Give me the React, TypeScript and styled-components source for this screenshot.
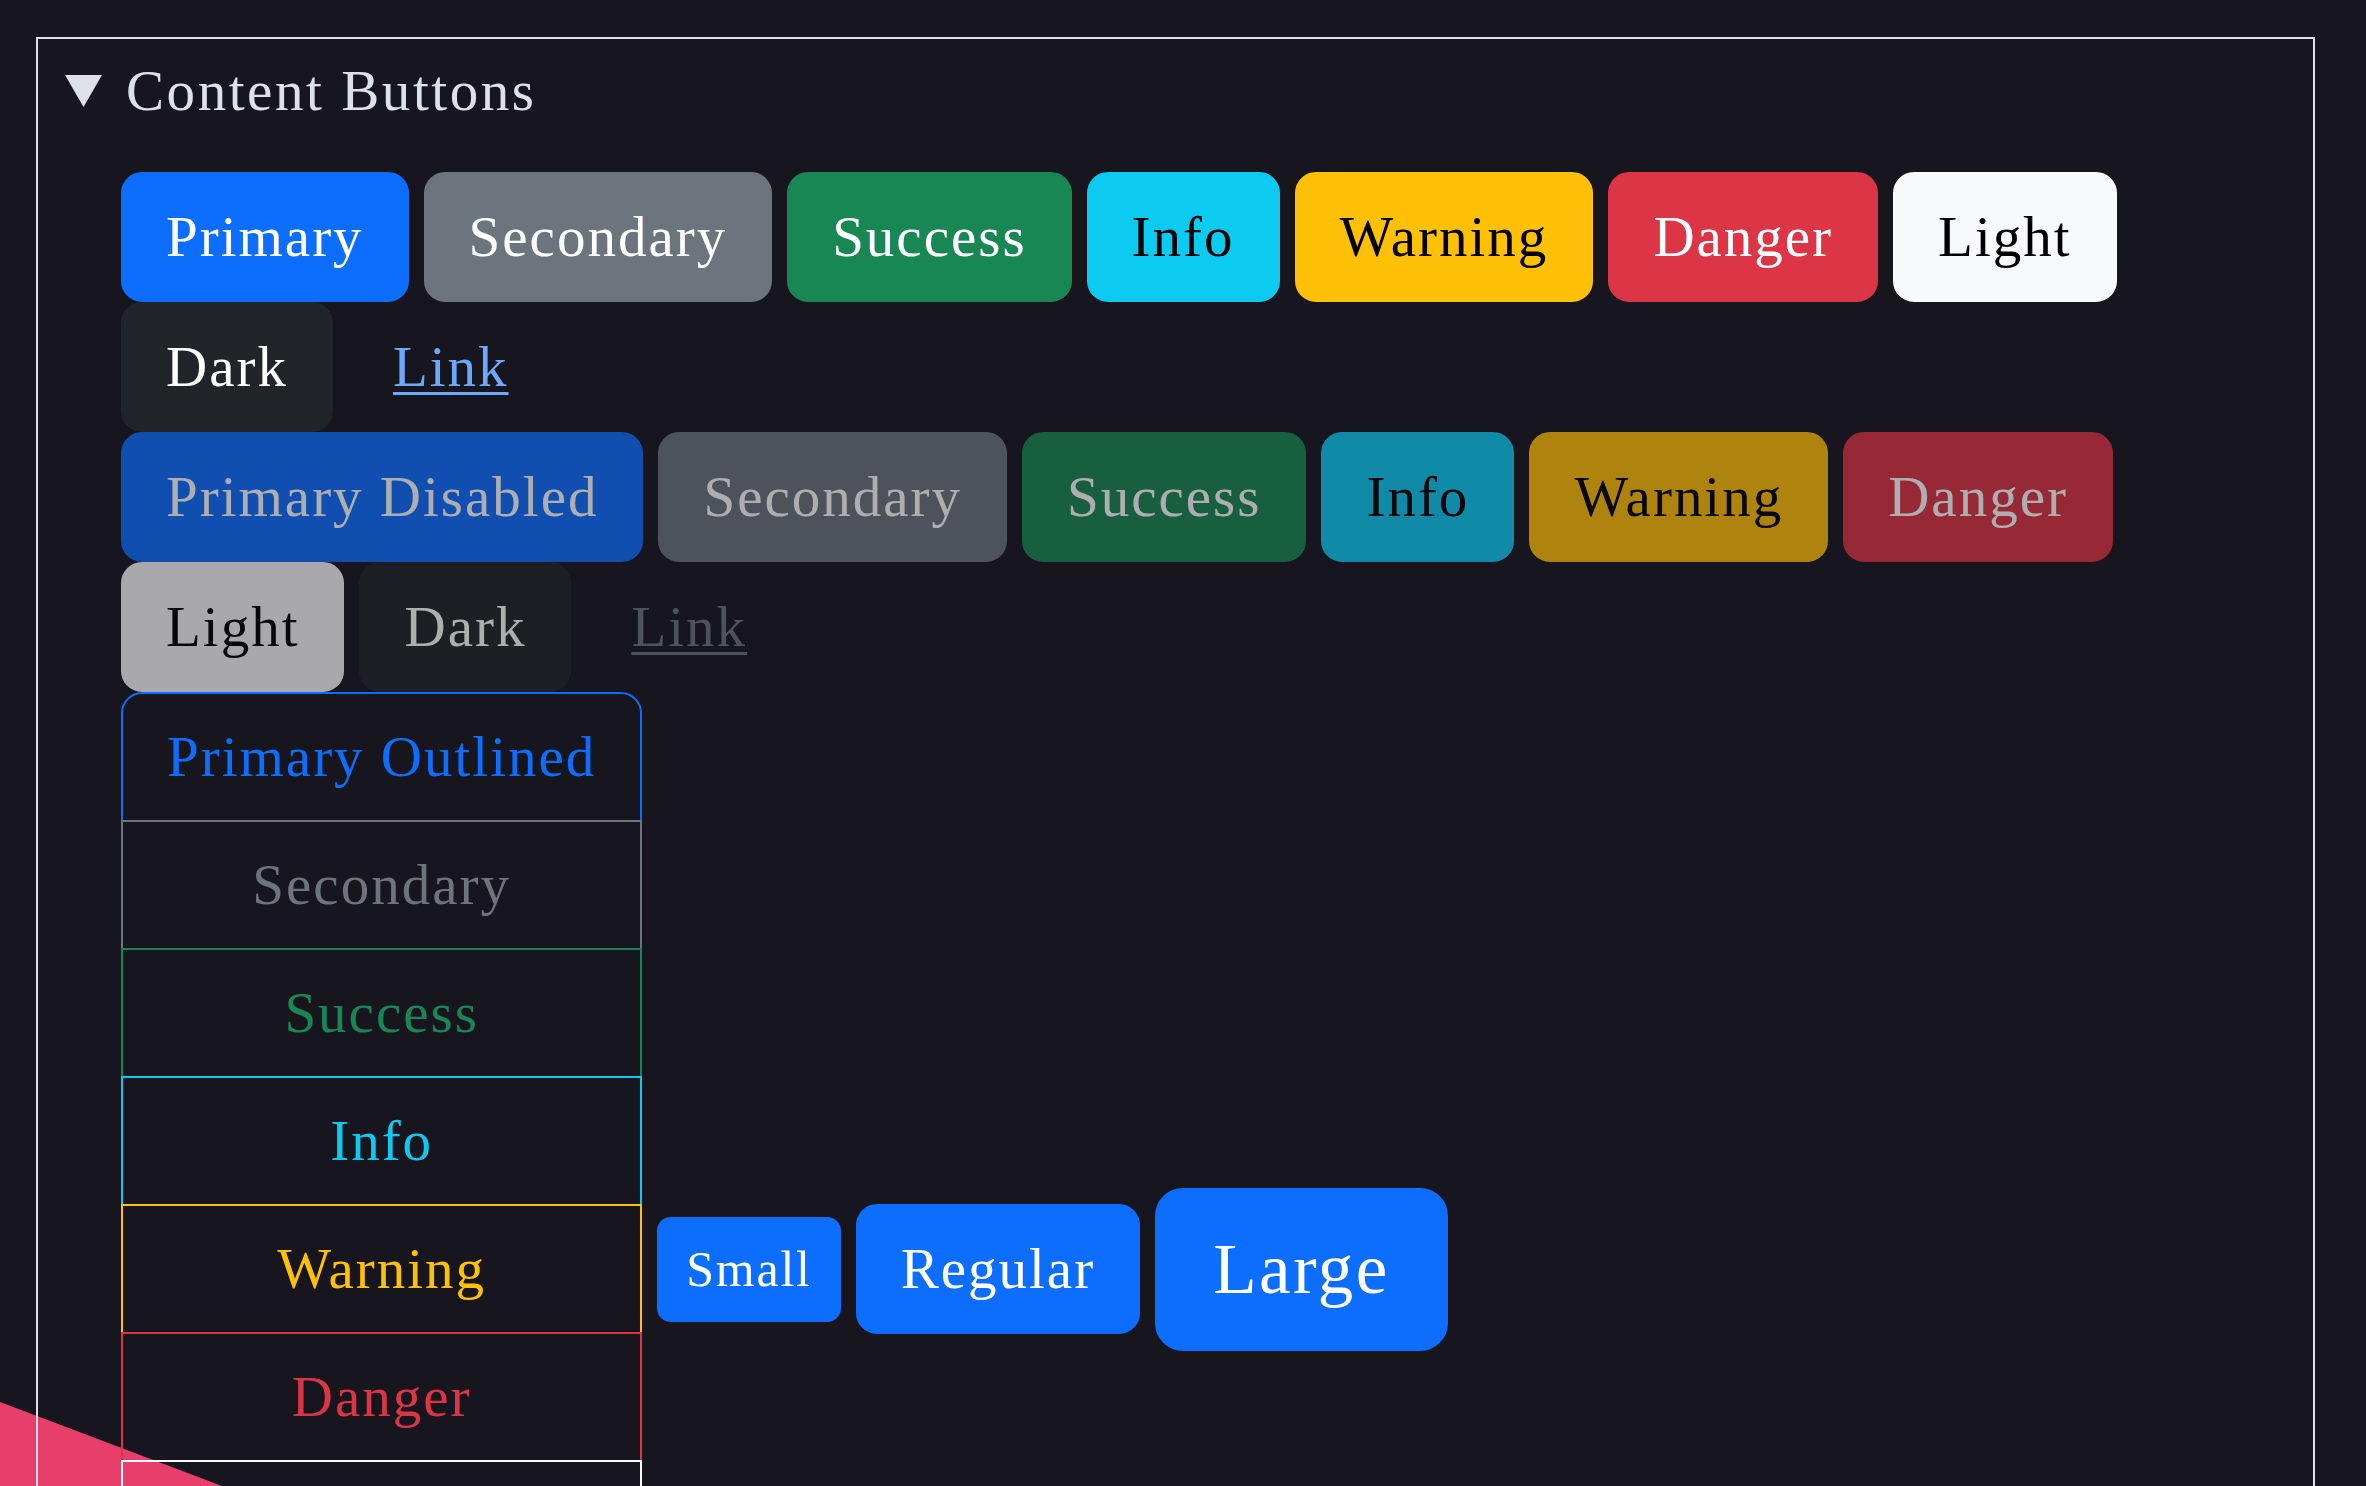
import React from "react";
import styled, { createGlobalStyle, css } from "styled-components";

type Variant =
  | "primary"
  | "secondary"
  | "success"
  | "info"
  | "warning"
  | "danger"
  | "light"
  | "dark"
  | "link";

type Size = "sm" | "md" | "lg";

const palette: Record<Variant, { bg: string; fg: string }> = {
  primary: { bg: "#0d6efd", fg: "#ffffff" },
  secondary: { bg: "#6c757d", fg: "#ffffff" },
  success: { bg: "#198754", fg: "#ffffff" },
  info: { bg: "#0dcaf0", fg: "#000000" },
  warning: { bg: "#ffc107", fg: "#000000" },
  danger: { bg: "#dc3545", fg: "#ffffff" },
  light: { bg: "#f8f9fa", fg: "#000000" },
  dark: { bg: "#212529", fg: "#ffffff" },
  link: { bg: "transparent", fg: "#6ea8fe" },
};

const GlobalStyle = createGlobalStyle`
  html, body {
    margin: 0;
    padding: 0;
    background: #17161f;
    overflow: hidden;
  }
  body {
    font-family: "Liberation Serif", "Times New Roman", serif;
    color: #dee2e6;
  }
`;

const Page = styled.div`
  position: relative;
  padding: 37px 51px 0 36px;
`;

const Corner = styled.svg`
  position: fixed;
  left: 0;
  bottom: 0;
  width: 222px;
  height: 84px;
`;

const Panel = styled.details`
  position: relative;
  border: 2px solid #dee2e6;
  padding: 9px 27px 60px;
`;

const Summary = styled.summary`
  list-style: none;
  display: flex;
  align-items: center;
  gap: 24px;
  font-size: 57px;
  line-height: 85px;
  letter-spacing: 0.045em;
  cursor: pointer;

  &::-webkit-details-marker {
    display: none;
  }
`;

const Body = styled.div`
  margin-top: 39px;
  padding-left: 56px;
  display: flex;
  flex-direction: column;
`;

const ButtonRow = styled.div`
  display: flex;
  flex-wrap: wrap;
  column-gap: 15px;
  row-gap: 0;
`;

const SizeRow = styled.div`
  display: flex;
  align-items: center;
  gap: 15px;
`;

const sizes = {
  sm: css`
    font-size: 50px;
    line-height: 75px;
    padding: 13px 27px;
    border-radius: 14px;
  `,
  md: css`
    font-size: 57px;
    line-height: 84px;
    padding: 21px 43px;
    border-radius: 21px;
  `,
  lg: css`
    font-size: 71px;
    line-height: 107px;
    padding: 26px 56px;
    border-radius: 28px;
  `,
};

const Btn = styled.button<{ $variant: Variant; $size?: Size }>`
  font-family: inherit;
  font-weight: 400;
  letter-spacing: 0.035em;
  white-space: nowrap;
  cursor: pointer;
  border: 2px solid
    ${(p) => (p.$variant === "link" ? "transparent" : palette[p.$variant].bg)};
  background: ${(p) => palette[p.$variant].bg};
  color: ${(p) => palette[p.$variant].fg};
  text-decoration: ${(p) => (p.$variant === "link" ? "underline" : "none")};
  text-underline-offset: 6px;
  text-decoration-thickness: 3px;
  ${(p) => sizes[p.$size || "md"]}

  &:disabled {
    opacity: 0.65;
    cursor: default;
    ${(p) => p.$variant === "link" && "color: #6c757d;"}
  }
`;

const VerticalGroup = styled.div`
  display: inline-flex;
  flex-direction: column;
  align-items: stretch;
`;

const OutlineBtn = styled.button<{ $variant: Variant }>`
  font-family: inherit;
  letter-spacing: 0.035em;
  white-space: nowrap;
  cursor: pointer;
  font-size: 57px;
  line-height: 84px;
  padding: 21px 44px;
  text-align: center;
  background: transparent;
  border: 2px solid
    ${(p) => (p.$variant === "link" ? "transparent" : palette[p.$variant].bg)};
  color: ${(p) => (p.$variant === "link" ? palette.link.fg : palette[p.$variant].bg)};
  text-decoration: ${(p) => (p.$variant === "link" ? "underline" : "none")};
  border-radius: 0;

  &:first-child {
    border-top-left-radius: 21px;
    border-top-right-radius: 21px;
  }
  &:last-child {
    border-bottom-left-radius: 21px;
    border-bottom-right-radius: 21px;
  }
  &:not(:first-child) {
    margin-top: -2px;
  }
`;

const solid: [Variant, string][] = [
  ["primary", "Primary"],
  ["secondary", "Secondary"],
  ["success", "Success"],
  ["info", "Info"],
  ["warning", "Warning"],
  ["danger", "Danger"],
  ["light", "Light"],
  ["dark", "Dark"],
  ["link", "Link"],
];

const disabled: [Variant, string][] = [
  ["primary", "Primary Disabled"],
  ["secondary", "Secondary"],
  ["success", "Success"],
  ["info", "Info"],
  ["warning", "Warning"],
  ["danger", "Danger"],
  ["light", "Light"],
  ["dark", "Dark"],
  ["link", "Link"],
];

const outlined: [Variant, string][] = [
  ["primary", "Primary Outlined"],
  ["secondary", "Secondary"],
  ["success", "Success"],
  ["info", "Info"],
  ["warning", "Warning"],
  ["danger", "Danger"],
  ["light", "Light"],
  ["dark", "Dark"],
  ["link", "Link"],
];

export default function App() {
  return (
    <>
      <GlobalStyle />
      <Corner viewBox="0 0 222 84" preserveAspectRatio="none">
        <polygon points="0,0 222,84 0,84" fill="#e83e6b" />
      </Corner>
      <Page>
        <Panel open>
          <Summary>
            <svg width="37" height="32" viewBox="0 0 37 32">
              <polygon points="0,0 37,0 18.5,32" fill="#dee2e6" />
            </svg>
            Content Buttons
          </Summary>
          <Body>
            <ButtonRow>
              {solid.map(([v, label]) => (
                <Btn key={"s" + v} $variant={v}>
                  {label}
                </Btn>
              ))}
            </ButtonRow>
            <ButtonRow>
              {disabled.map(([v, label]) => (
                <Btn key={"d" + v} $variant={v} disabled>
                  {label}
                </Btn>
              ))}
            </ButtonRow>
            <SizeRow>
              <VerticalGroup>
                {outlined.map(([v, label]) => (
                  <OutlineBtn key={"o" + v} $variant={v}>
                    {label}
                  </OutlineBtn>
                ))}
              </VerticalGroup>
              <Btn $variant="primary" $size="sm">
                Small
              </Btn>
              <Btn $variant="primary">Regular</Btn>
              <Btn $variant="primary" $size="lg">
                Large
              </Btn>
            </SizeRow>
          </Body>
        </Panel>
      </Page>
    </>
  );
}
